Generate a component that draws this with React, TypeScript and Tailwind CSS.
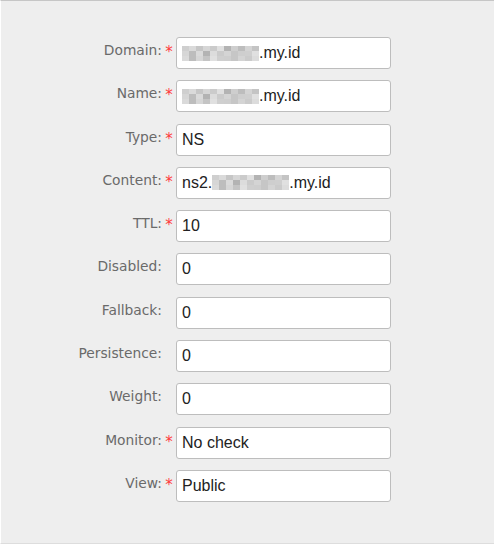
import React from "react";

const rows: { label: string; req: boolean; value: React.ReactNode }[] = [
  { label: "Domain:", req: true, value: "blur.my.id" },
  { label: "Name:", req: true, value: "blur.my.id" },
  { label: "Type:", req: true, value: "NS" },
  { label: "Content:", req: true, value: "ns2.blur.my.id" },
  { label: "TTL:", req: true, value: "10" },
  { label: "Disabled:", req: false, value: "0" },
  { label: "Fallback:", req: false, value: "0" },
  { label: "Persistence:", req: false, value: "0" },
  { label: "Weight:", req: false, value: "0" },
  { label: "Monitor:", req: true, value: "No check" },
  { label: "View:", req: true, value: "Public" },
];

function Blur({ n }: { n: number }) {
  const cells = [
    "#cfcfcf", "#dadada", "#c6c6c6", "#d6d6d6", "#cbcbcb", "#e0e0e0", "#b3b3b3", "#cecece", "#bdbdbd", "#d4d4d4", "#c4c4c4", "#dcdcdc",
  ];
  return (
    <span className="inline-flex h-[15px] items-stretch align-middle">
      {Array.from({ length: n }).map((_, i) => (
        <span
          key={i}
          className="w-[7px]"
          style={{
            background: `linear-gradient(${cells[i % cells.length]} 33%, ${cells[(i * 5 + 3) % cells.length]} 33% 66%, ${cells[(i * 7 + 1) % cells.length]} 66%)`,
          }}
        />
      ))}
    </span>
  );
}

function Value({ v }: { v: React.ReactNode }) {
  if (v === "blur.my.id")
    return (
      <span className="flex items-center">
        <Blur n={11} />
        <span>.my.id</span>
      </span>
    );
  if (v === "ns2.blur.my.id")
    return (
      <span className="flex items-center">
        <span>ns2.</span>
        <Blur n={11} />
        <span>.my.id</span>
      </span>
    );
  return <span>{v}</span>;
}

export default function App() {
  return (
    <div className="w-[495px] h-[545px] bg-white">
      <div className="w-[494px] h-[544px] bg-[#eeeeee] border-t border-t-[#c6c6c6] border-b border-b-[#dddddd] border-l border-l-white">
        <div
          className="grid pt-[36px]"
          style={{ gridTemplateColumns: "161px 14px 215px", gridAutoRows: "43.3px" }}
        >
          {rows.map((r) => (
            <React.Fragment key={r.label}>
              <div className="pt-[4px] text-right text-[13.8px] leading-[18px] text-[#6a6a6a] font-['DejaVu_Sans',sans-serif]">
                {r.label}
              </div>
              <div className="pt-[6px] text-center text-[15px] leading-[18px] text-[#ff3b3b] font-['DejaVu_Sans',sans-serif]">
                {r.req ? "*" : ""}
              </div>
              <div className="h-[32px] rounded-[3px] border border-[#bdbdbd] bg-white pl-[5px] flex items-center text-[16px] text-[#222222] font-['Liberation_Sans',Arial,sans-serif]">
                <Value v={r.value} />
              </div>
            </React.Fragment>
          ))}
        </div>
      </div>
    </div>
  );
}
